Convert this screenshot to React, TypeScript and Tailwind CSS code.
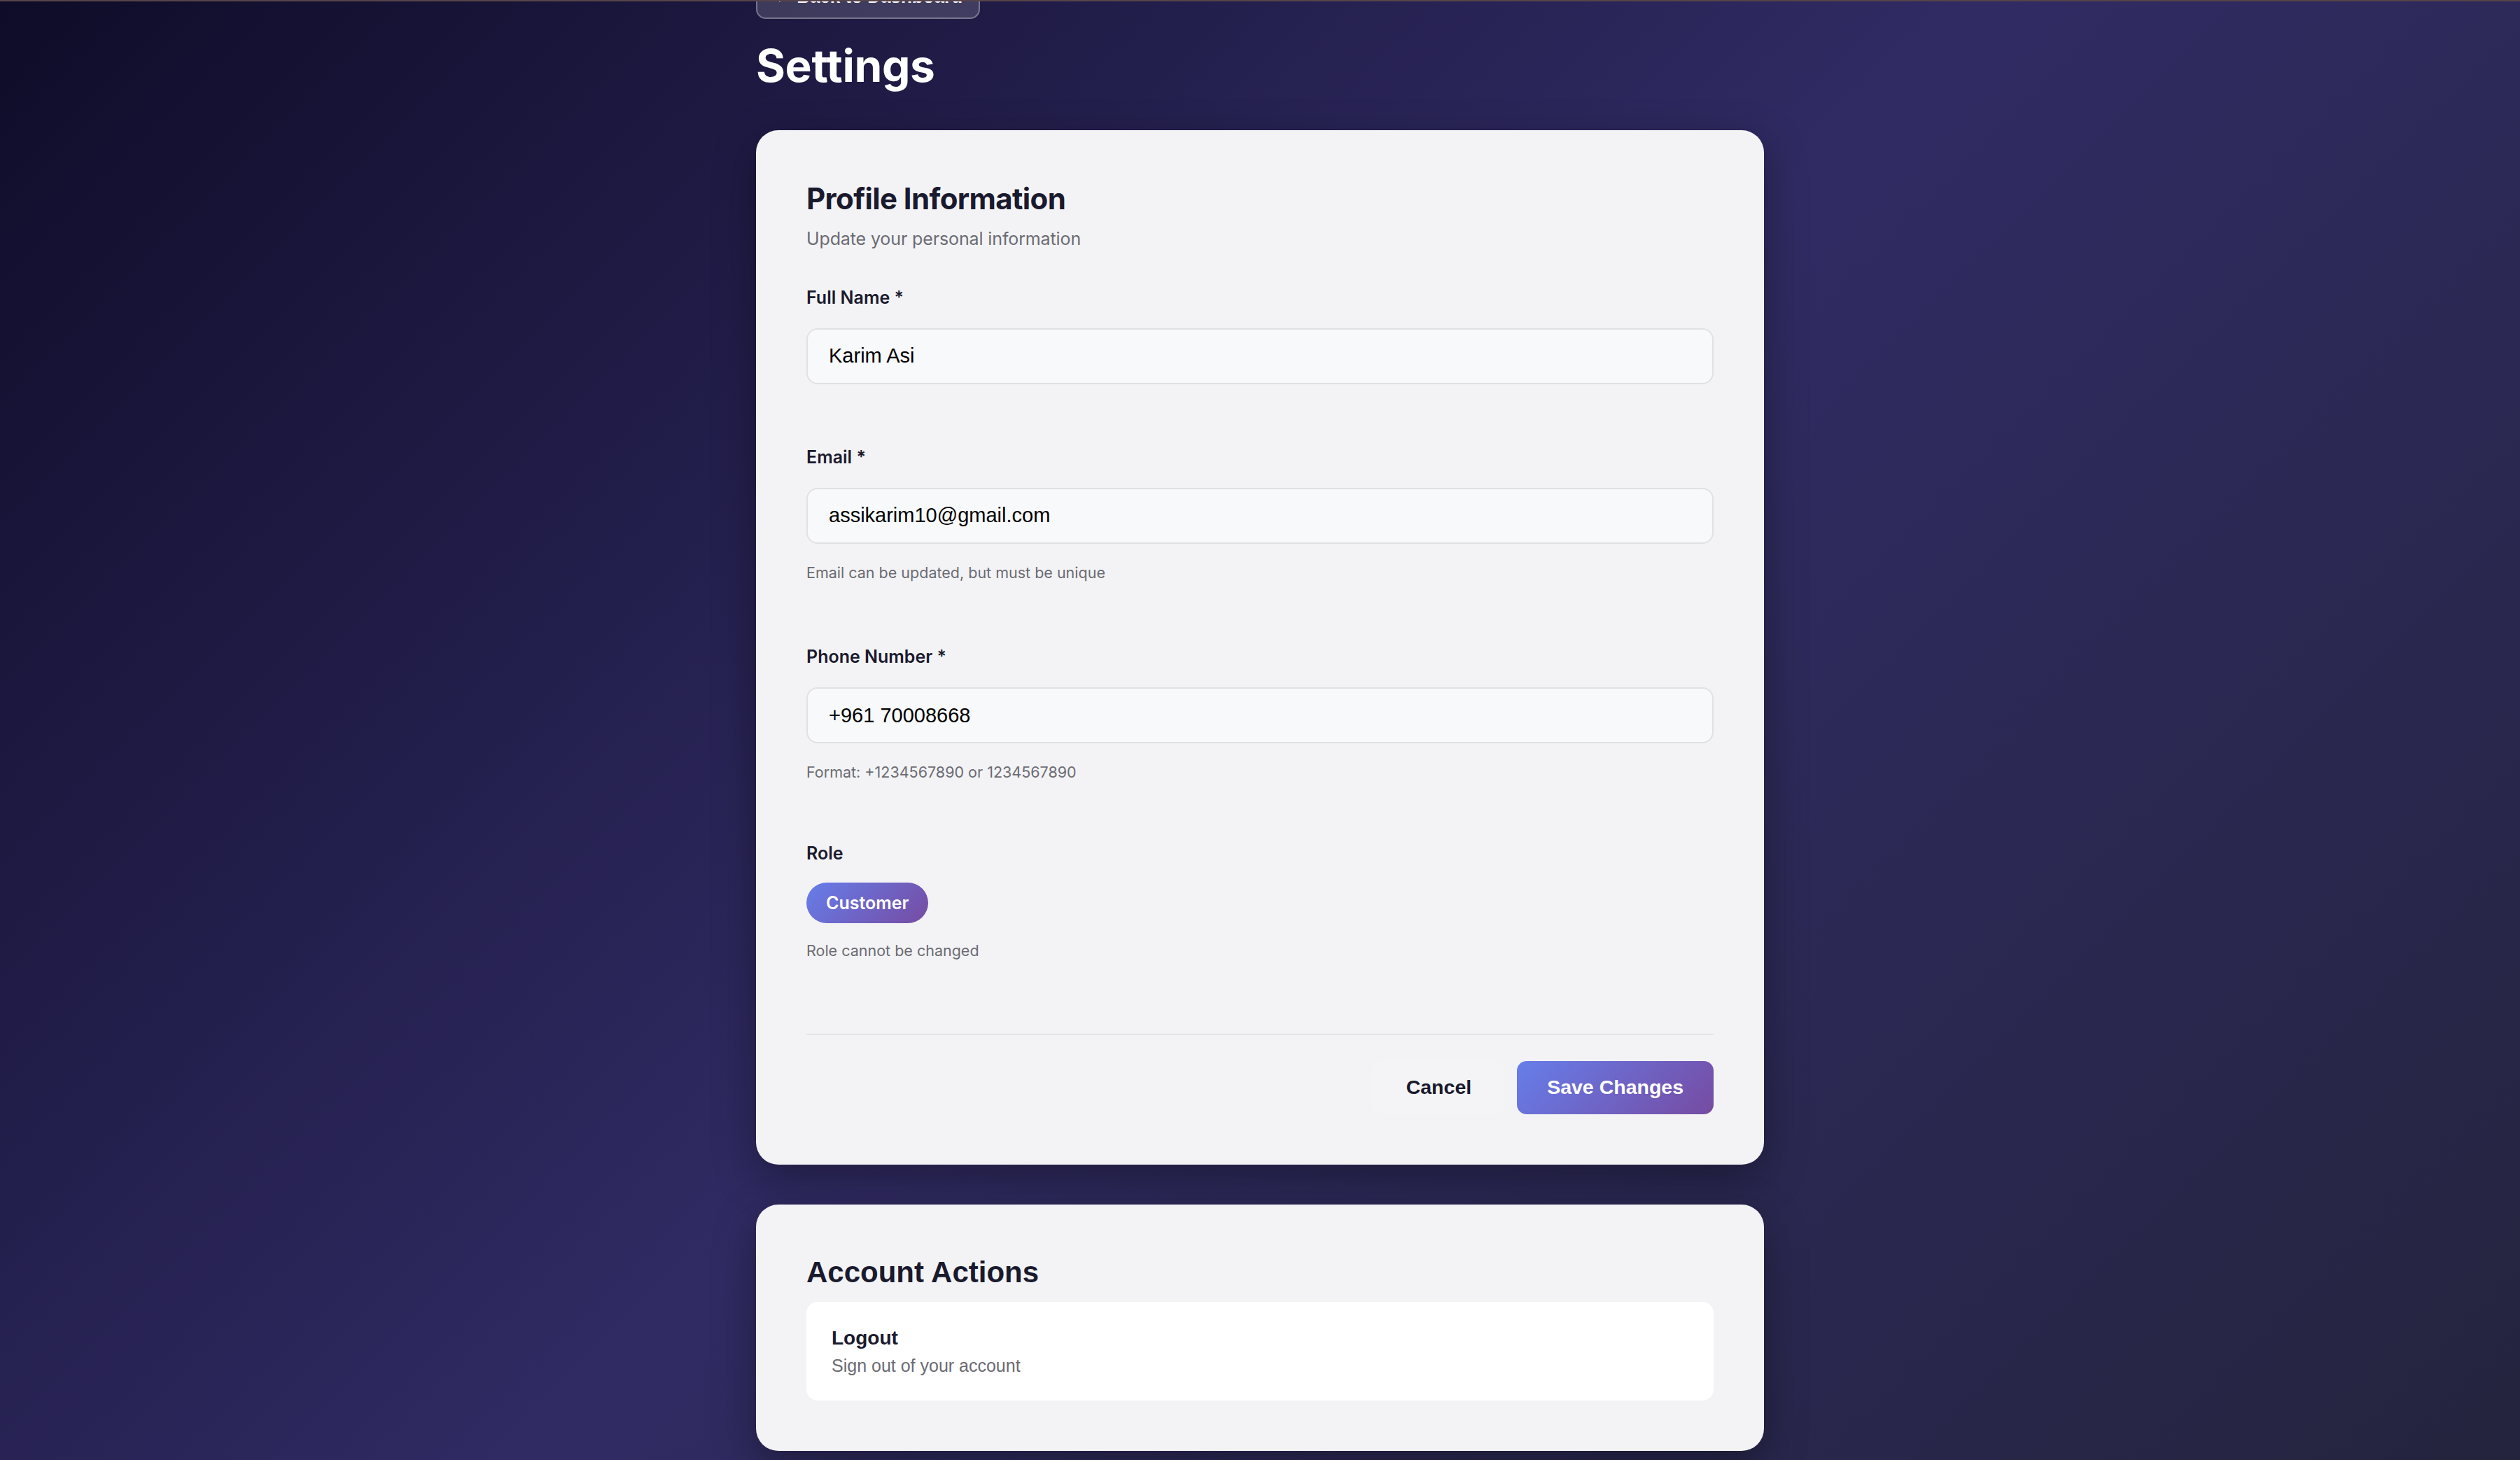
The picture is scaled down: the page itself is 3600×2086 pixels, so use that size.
import React from 'react';

const inter = "font-['Inter',_'Noto_Sans',_sans-serif]";
const arial = "font-['Liberation_Sans',_Arial,_sans-serif]";

interface FieldProps {
  label: string;
  value: string;
  hint?: string;
  first?: boolean;
}

const Field: React.FC<FieldProps> = ({ label, value, hint, first }) => (
  <div className={first ? 'mt-[46px]' : 'mt-[86px]'}>
    <label className={`${inter} block text-[25px] leading-[1.44] font-semibold text-[#1a1a2e]`}>{label}</label>
    <input
      readOnly
      value={value}
      className={`${arial} mt-[26px] block w-full h-[80px] rounded-[16px] border-2 border-[#e1e1e5] bg-[#f8f9fa] px-[30px] text-[29px] text-black outline-none`}
    />
    {hint && <p className={`${inter} mt-[25px] text-[21.5px] leading-[1.5] text-[#6b6b73]`}>{hint}</p>}
  </div>
);

export default function App() {
  return (
    <div className="relative h-screen overflow-hidden bg-[linear-gradient(135deg,#0f0c29_0%,#302b63_50%,#24243e_100%)]">
      {/* thin bar at the very top */}
      <div className="absolute inset-x-0 top-0 h-[2px] bg-[#564448]" />

      <div className="mx-auto w-[1440px]">
        <button
          className={`${arial} -mt-[40px] block w-[320px] rounded-[14px] border-2 border-white/30 bg-white/15 pt-[14px] pb-[10px] text-[26px] leading-[1.5] font-semibold text-white`}
        >
          ← Back to Dashboard
        </button>

        <h1 className={`${inter} mt-[29px] text-[64px] leading-[1.2] font-bold tracking-[-0.005em] text-white`}>Settings</h1>

        {/* Profile card */}
        <section className="mt-[53px] rounded-[32px] bg-[#f3f3f5] p-[72px] shadow-[0_20px_60px_rgba(0,0,0,0.35)]">
          <h2 className={`${inter} text-[42px] leading-[1.25] font-bold tracking-[-0.015em] text-[#1a1a2e]`}>Profile Information</h2>
          <p className={`${inter} mt-[13px] text-[25px] leading-[1.5] tracking-[-0.005em] text-[#6b6b73]`}>Update your personal information</p>

          <Field first label="Full Name *" value="Karim Asi" />
          <Field label="Email *" value="assikarim10@gmail.com" hint="Email can be updated, but must be unique" />
          <Field label="Phone Number *" value="+961 70008668" hint="Format: +1234567890 or 1234567890" />

          <div className="mt-[82px]">
            <div className={`${inter} text-[25px] leading-[1.44] font-semibold text-[#1a1a2e]`}>Role</div>
            <span
              className={`${inter} mt-[24px] inline-flex h-[58px] items-center rounded-full bg-[linear-gradient(135deg,#667eea_0%,#764ba2_100%)] px-[28px] text-[25px] font-semibold text-white`}
            >
              Customer
            </span>
            <p className={`${inter} mt-[23px] text-[21.5px] leading-[1.5] text-[#6b6b73]`}>Role cannot be changed</p>
          </div>

          <div className="mt-[102px] flex justify-end gap-[18px] border-t-2 border-[#e4e4e8] pt-[37px]">
            <button className={`${arial} h-[76px] rounded-[14px] bg-[#f4f4f6] px-[47px] text-[28.5px] font-bold text-[#1a1a2e]`}>
              Cancel
            </button>
            <button
              className={`${arial} h-[76px] rounded-[14px] bg-[linear-gradient(135deg,#667eea_0%,#764ba2_100%)] px-[43px] text-[28.5px] font-bold text-white`}
            >
              Save Changes
            </button>
          </div>
        </section>

        {/* Account card */}
        <section className="mt-[57px] rounded-[32px] bg-[#f3f3f5] p-[72px] shadow-[0_20px_60px_rgba(0,0,0,0.35)]">
          <h2 className={`${arial} text-[42px] leading-[1.2] font-bold text-[#1a1a2e]`}>Account Actions</h2>
          <div className={`${arial} mt-[17px] rounded-[16px] bg-white px-[36px] py-[31px]`}>
            <div className="text-[28px] leading-[1.5] font-bold text-[#1a1a2e]">Logout</div>
            <div className="text-[25px] leading-[1.5] text-[#6b6b73]">Sign out of your account</div>
          </div>
        </section>
      </div>
    </div>
  );
}
